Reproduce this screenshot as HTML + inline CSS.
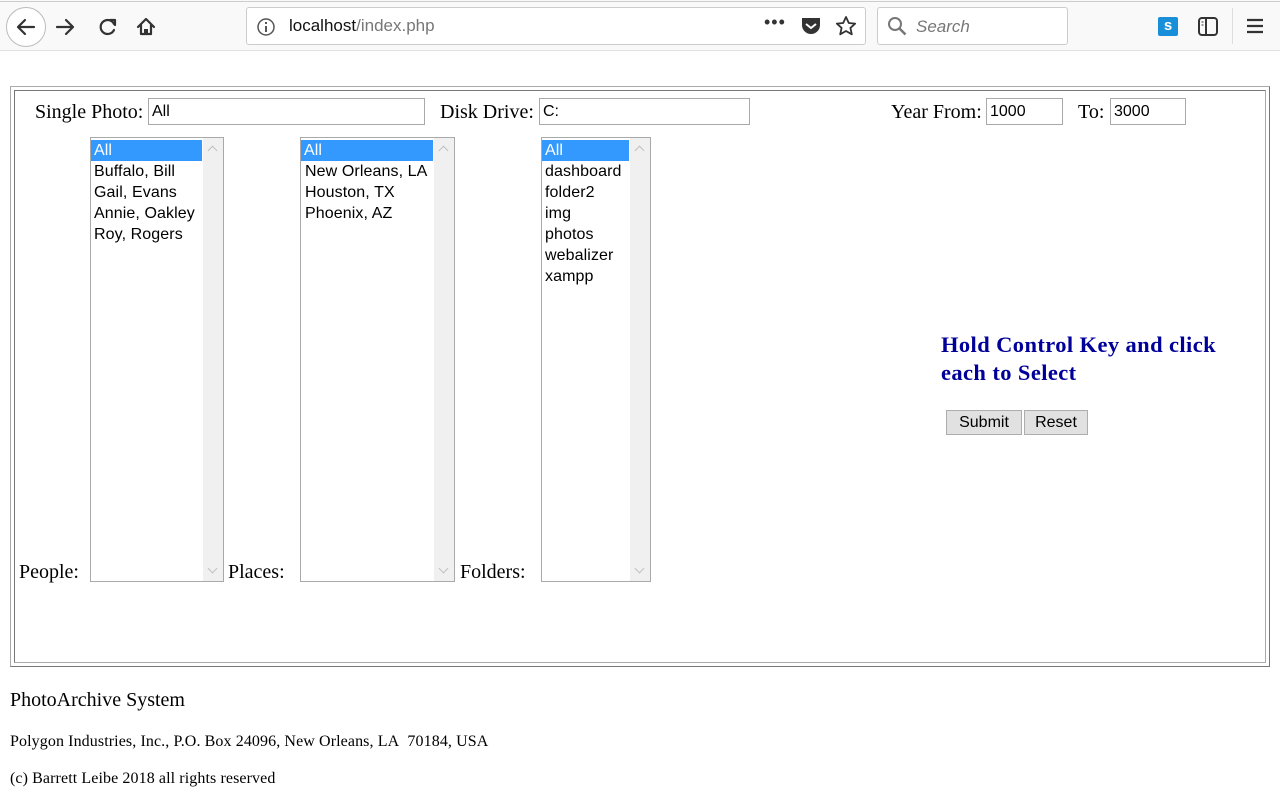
<!DOCTYPE html>
<html><head><meta charset="utf-8"><style>
*{box-sizing:border-box;margin:0;padding:0}
body{width:1280px;height:810px;background:#fff;position:relative;overflow:hidden;font-family:"Liberation Serif",serif;color:#000}
.a{position:absolute;white-space:nowrap}
.sans{font-family:"Liberation Sans",sans-serif}
.inp{position:absolute;border:1px solid #a9a9a9;background:#fff;font-family:"Liberation Sans",sans-serif;font-size:16px;padding:3px 3px 1px;line-height:20px}
.lb{position:absolute;border:1px solid #a9a9a9;background:#fff;font-family:"Liberation Sans",sans-serif;font-size:16px}
.lb .it{height:21px;line-height:21px;padding-left:3px;letter-spacing:0.1px}
.lb .sel{background:#3399ff;color:#fff}
.lb .sb{position:absolute;right:0;top:0;bottom:0;width:20px;background:#f0f0f0}
.lb .sb:before{content:"";position:absolute;left:6px;top:9px;width:6px;height:6px;border-left:1px solid #c0c0c0;border-top:1px solid #c0c0c0;transform:rotate(45deg)}
.lb .sb:after{content:"";position:absolute;left:6px;bottom:9px;width:6px;height:6px;border-right:1px solid #c0c0c0;border-bottom:1px solid #c0c0c0;transform:rotate(45deg)}
.lbl{font-size:20px}
.btn{position:absolute;top:410px;height:25px;border:1px solid #adadad;background:#e1e1e1;font-family:"Liberation Sans",sans-serif;font-size:16px;text-align:center;line-height:24px}
</style></head><body>
<div class="a" style="left:0;top:0;width:1280px;height:51px;background:#f9f9fa;border-bottom:1px solid #e0e0e0"></div>
<div class="a" style="left:0;top:0;width:1280px;height:2px;border-bottom:1px solid #ccc"></div>
<div class="a" style="left:6px;top:7px;width:40px;height:40px;border:1px solid #bbb;border-radius:50%;background:#fff"></div>
<svg class="a" style="left:0;top:0" width="170" height="51" fill="none" stroke="#333" stroke-width="2.2" stroke-linecap="round" stroke-linejoin="round">
<path d="M34 27H18M25 20l-7 7 7 7"/><path d="M57 27h16M66 20l7 7-7 7"/>
<path d="M114 24a7 7 0 1 0 0 6"/><path d="M110 20h5v5" />
<path d="M138 27l8-8 8 8M141 25v9h10v-9"/><rect x="144" y="29" width="4" height="5" fill="#333" stroke="none"/>
</svg>
<div class="a" style="left:246px;top:7px;width:620px;height:38px;background:#fff;border:1px solid #ccc;border-radius:3px"></div>
<svg class="a" style="left:256px;top:17px" width="20" height="20"><circle cx="10" cy="10" r="8" fill="none" stroke="#555" stroke-width="1.5"/><rect x="9" y="9" width="2" height="6" fill="#555"/><rect x="9" y="5" width="2" height="2" fill="#555"/></svg>
<div class="a sans" style="left:289px;top:16px;font-size:17px;color:#111">localhost<span style="color:#777">/index.php</span></div>
<div class="a sans" style="left:764px;top:12px;font-size:18px;color:#333;letter-spacing:1px">•••</div>
<svg class="a" style="left:800px;top:16px" width="22" height="20"><path d="M2 2h18v7a9 9 0 0 1-18 0z" fill="#333"/><path d="M6 8l5 4 5-4" stroke="#fff" stroke-width="2" fill="none"/></svg>
<svg class="a" style="left:835px;top:15px" width="22" height="22"><path d="M11 2l2.8 6 6.4.6-4.8 4.3 1.4 6.4L11 16l-5.8 3.3 1.4-6.4L1.8 8.6 8.2 8z" fill="none" stroke="#333" stroke-width="1.8" stroke-linejoin="round"/></svg>
<div class="a" style="left:877px;top:7px;width:191px;height:38px;background:#fff;border:1px solid #ccc;border-radius:3px"></div>
<svg class="a" style="left:887px;top:16px" width="22" height="22"><circle cx="8" cy="8" r="6" fill="none" stroke="#777" stroke-width="2"/><path d="M12.5 12.5l6 6" stroke="#777" stroke-width="2.5"/></svg>
<div class="a sans" style="left:916px;top:17px;font-size:17px;color:#777;font-style:italic">Search</div>
<div class="a" style="left:1158px;top:17px;width:20px;height:19px;background:#1a8fd9;border-radius:2px;color:#fff;font:bold 15px 'Liberation Sans',sans-serif;text-align:center;line-height:18px">s</div>
<svg class="a" style="left:1197px;top:16px" width="22" height="22"><rect x="2" y="2" width="18" height="17" rx="3" fill="none" stroke="#333" stroke-width="2"/><path d="M9 2v17" stroke="#333" stroke-width="2"/><path d="M4.5 6h2M4.5 9h2" stroke="#333"/></svg>
<div class="a" style="left:1232px;top:8px;width:1px;height:36px;background:#ddd"></div>
<svg class="a" style="left:1246px;top:17px" width="20" height="18"><path d="M1 3h16M1 9h16M1 15h16" stroke="#333" stroke-width="2.2"/></svg>

<div class="a" style="left:10px;top:86px;width:1260px;height:581px;border:1px solid #aaa;border-right-color:#777;border-bottom-color:#777"></div>
<div class="a" style="left:14px;top:90px;width:1252px;height:573px;border:1px solid #777;border-right-color:#aaa;border-bottom-color:#aaa"></div>

<div class="a lbl" style="left:35px;top:101px">Single Photo:</div>
<div class="inp" style="left:148px;top:98px;width:277px;height:27px">All</div>
<div class="a lbl" style="left:440px;top:101px">Disk Drive:</div>
<div class="inp" style="left:539px;top:98px;width:211px;height:27px">C:</div>
<div class="a lbl" style="left:891px;top:101px">Year From:</div>
<div class="inp" style="left:986px;top:98px;width:77px;height:27px">1000</div>
<div class="a lbl" style="left:1078px;top:101px">To:</div>
<div class="inp" style="left:1110px;top:98px;width:76px;height:27px">3000</div>

<div class="lb" style="left:90px;top:137px;width:134px;height:445px;padding-top:2px">
<div class="it sel" style="width:111px">All</div><div class="it">Buffalo, Bill</div><div class="it">Gail, Evans</div><div class="it">Annie, Oakley</div><div class="it">Roy, Rogers</div><div class="sb"></div></div>
<div class="lb" style="left:300px;top:137px;width:155px;height:445px;padding-top:2px">
<div class="it sel" style="width:132px">All</div><div class="it" style="padding-left:4px">New Orleans, LA</div><div class="it" style="padding-left:4px">Houston, TX</div><div class="it" style="padding-left:4px">Phoenix, AZ</div><div class="sb"></div></div>
<div class="lb" style="left:541px;top:137px;width:110px;height:445px;padding-top:2px">
<div class="it sel" style="width:87px">All</div><div class="it">dashboard</div><div class="it">folder2</div><div class="it">img</div><div class="it">photos</div><div class="it">webalizer</div><div class="it">xampp</div><div class="sb"></div></div>

<div class="a lbl" style="left:19px;top:561px">People:</div>
<div class="a lbl" style="left:228px;top:561px">Places:</div>
<div class="a lbl" style="left:460px;top:561px">Folders:</div>

<div class="a" style="left:941px;top:331px;font-size:22.5px;font-weight:bold;color:#000099;line-height:28px;letter-spacing:0.4px">Hold Control Key and click<br>each to Select</div>
<div class="btn" style="left:946px;width:76px">Submit</div>
<div class="btn" style="left:1024px;width:64px">Reset</div>

<div class="a" style="left:10px;top:689px;font-size:20px">PhotoArchive System</div>
<div class="a" style="left:10px;top:733px;font-size:16px;letter-spacing:0.1px">Polygon Industries, Inc., P.O. Box 24096, New Orleans, LA&nbsp; 70184, USA</div>
<div class="a" style="left:10px;top:770px;font-size:16px;letter-spacing:0.1px">(c) Barrett Leibe 2018 all rights reserved</div>
</body></html>
